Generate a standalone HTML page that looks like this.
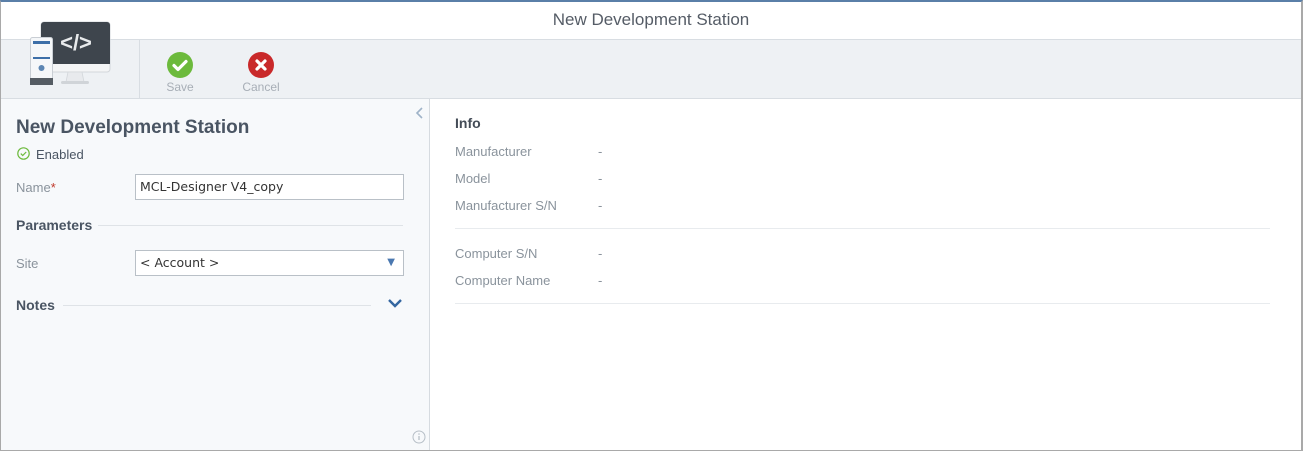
<!DOCTYPE html>
<html><head><meta charset="utf-8"><style>
*{box-sizing:border-box;margin:0;padding:0}
body{width:1303px;height:451px;overflow:hidden;font-family:"Liberation Sans",sans-serif;background:#fff;position:relative}
.frame{position:absolute;left:0;top:0;width:1303px;height:451px;border-left:1px solid #a9a9a9;border-right:2px solid #a9a9a9;border-bottom:1px solid #a9a9a9;border-top:2px solid #5a7fa8}
.hdr{position:absolute;left:1px;top:2px;width:1300px;height:37px;background:#fff;text-align:center;font-size:17px;color:#555c66;line-height:36px}
.tb{position:absolute;left:1px;top:39px;width:1300px;height:60px;background:#eef1f4;border-top:1px solid #d8dde2;border-bottom:1px solid #d8dde2}
.sep{position:absolute;left:138px;top:0;width:1px;height:58px;background:#d8dde2}
.btn{position:absolute;top:12px;font-size:12px;color:#a7aeb6;text-align:center}
.left{position:absolute;left:1px;top:99px;width:429px;height:351px;background:#f7f9fb;border-right:1px solid #d6dbe0}
.right{position:absolute;left:431px;top:99px;width:870px;height:351px;background:#fff}
.t{position:absolute;font-size:13px;color:#8a939c;white-space:nowrap}
.h{position:absolute;font-size:14px;font-weight:bold;color:#4a5563}
.line{position:absolute;height:1px;background:#dfe3e7}
.inp{position:absolute;left:134px;height:26px;width:269px;background:#fff;border:1px solid #b9c0c7;font-size:12.5px;color:#333;padding:0 4px;line-height:24px;font-family:"DejaVu Sans","Liberation Sans",sans-serif}
</style></head><body>
<div class="frame"></div>
<div class="hdr">New Development Station</div>
<div class="tb">
 <div class="sep"></div>
 <div class="btn" style="left:160px;width:38px">
  <svg width="26" height="26" viewBox="0 0 26 26" style="display:block;margin:0 auto 2px"><circle cx="13" cy="13" r="13" fill="#6cba3c"/><path d="M7 13.5l4 4 8-8" stroke="#fff" stroke-width="3.2" fill="none" stroke-linecap="round" stroke-linejoin="round"/></svg>Save</div>
 <div class="btn" style="left:238px;width:44px">
  <svg width="26" height="26" viewBox="0 0 26 26" style="display:block;margin:0 auto 2px"><circle cx="13" cy="13" r="13" fill="#c9292a"/><path d="M9 9l8 8M17 9l-8 8" stroke="#fff" stroke-width="3.2" stroke-linecap="round"/></svg>Cancel</div>
</div>
<svg style="position:absolute;left:28px;top:20px" width="86" height="68" viewBox="0 0 86 68">
 <rect x="13" y="2" width="69" height="50" rx="3" fill="#f4f5f6" stroke="#d3d7db" stroke-width="1"/>
 <rect x="13" y="2" width="69" height="42" rx="3" fill="#3e454d"/>
 <rect x="13" y="40" width="69" height="4" fill="#3e454d"/>
 <text x="48" y="30" text-anchor="middle" font-family="Liberation Sans" font-weight="bold" font-size="22" fill="#e8eaec">&lt;/&gt;</text>
 <path d="M40 52h14l2 10H38z" fill="#e8eaed" stroke="#d3d7db" stroke-width=".8"/>
 <rect x="33" y="61" width="28" height="3" rx="1.5" fill="#d0d4d8"/>
 <rect x="2.5" y="17.5" width="22" height="47" rx="2" fill="#f5f7f9" stroke="#c9ced4"/>
 <rect x="2" y="58" width="23" height="7" fill="#555c63"/>
 <rect x="5" y="21" width="17" height="3" fill="#3d6fa8"/>
 <rect x="5" y="37" width="17" height="2" fill="#3d6fa8"/>
 <circle cx="13.5" cy="48" r="3" fill="#5d86b3"/>
</svg>
<div class="left">
 <svg style="position:absolute;left:414px;top:8px" width="10" height="12" viewBox="0 0 10 12"><path d="M7 1L2 6l5 5" stroke="#9fb3c8" stroke-width="1.6" fill="none"/></svg>
 <div class="h" style="left:15px;top:18px;font-size:19px">New Development Station</div>
 <svg style="position:absolute;left:16px;top:48px" width="13" height="13" viewBox="0 0 13 13"><circle cx="6.5" cy="6.5" r="5.7" stroke="#6cba3c" stroke-width="1.2" fill="none"/><path d="M3.8 6.6l1.9 1.9 3.5-3.5" stroke="#6cba3c" stroke-width="1.2" fill="none"/></svg>
 <div class="t" style="left:35px;top:48px;color:#4a5563;font-size:13px">Enabled</div>
 <div class="t" style="left:15px;top:81px">Name<span style="color:#c0392b">*</span></div>
 <div class="inp" style="top:75px">MCL-Designer V4_copy</div>
 <div class="h" style="left:15px;top:118px">Parameters</div>
 <div class="line" style="left:97px;top:126px;width:305px"></div>
 <div class="t" style="left:15px;top:157px">Site</div>
 <div class="inp" style="top:151px">&lt; Account &gt;<span style="position:absolute;right:8px;top:0;color:#4a78b0;font-size:10px">▼</span></div>
 <div class="h" style="left:15px;top:198px">Notes</div>
 <div class="line" style="left:62px;top:206px;width:308px"></div>
 <svg style="position:absolute;left:386px;top:199px" width="16" height="11" viewBox="0 0 16 11"><path d="M2 2l6 6 6-6" stroke="#3466a0" stroke-width="2.4" fill="none"/></svg>
 <svg style="position:absolute;left:411px;top:331px" width="14" height="14" viewBox="0 0 14 14"><circle cx="7" cy="7" r="6" stroke="#b7bfc7" stroke-width="1" fill="none"/><path d="M7 6v4" stroke="#b7bfc7" stroke-width="1.3"/><circle cx="7" cy="4" r=".8" fill="#b7bfc7"/></svg>
</div>
<div class="right">
 <div class="h" style="left:24px;top:16px;font-size:14px;color:#444c57">Info</div>
 <div class="t" style="left:24px;top:45px">Manufacturer</div><div class="t" style="left:167px;top:45px">-</div>
 <div class="t" style="left:24px;top:72px">Model</div><div class="t" style="left:167px;top:72px">-</div>
 <div class="t" style="left:24px;top:99px">Manufacturer S/N</div><div class="t" style="left:167px;top:99px">-</div>
 <div class="line" style="left:24px;top:129px;width:815px;background:#e8ebee"></div>
 <div class="t" style="left:24px;top:147px">Computer S/N</div><div class="t" style="left:167px;top:147px">-</div>
 <div class="t" style="left:24px;top:174px">Computer Name</div><div class="t" style="left:167px;top:174px">-</div>
 <div class="line" style="left:24px;top:204px;width:815px;background:#e8ebee"></div>
</div>
</body></html>
